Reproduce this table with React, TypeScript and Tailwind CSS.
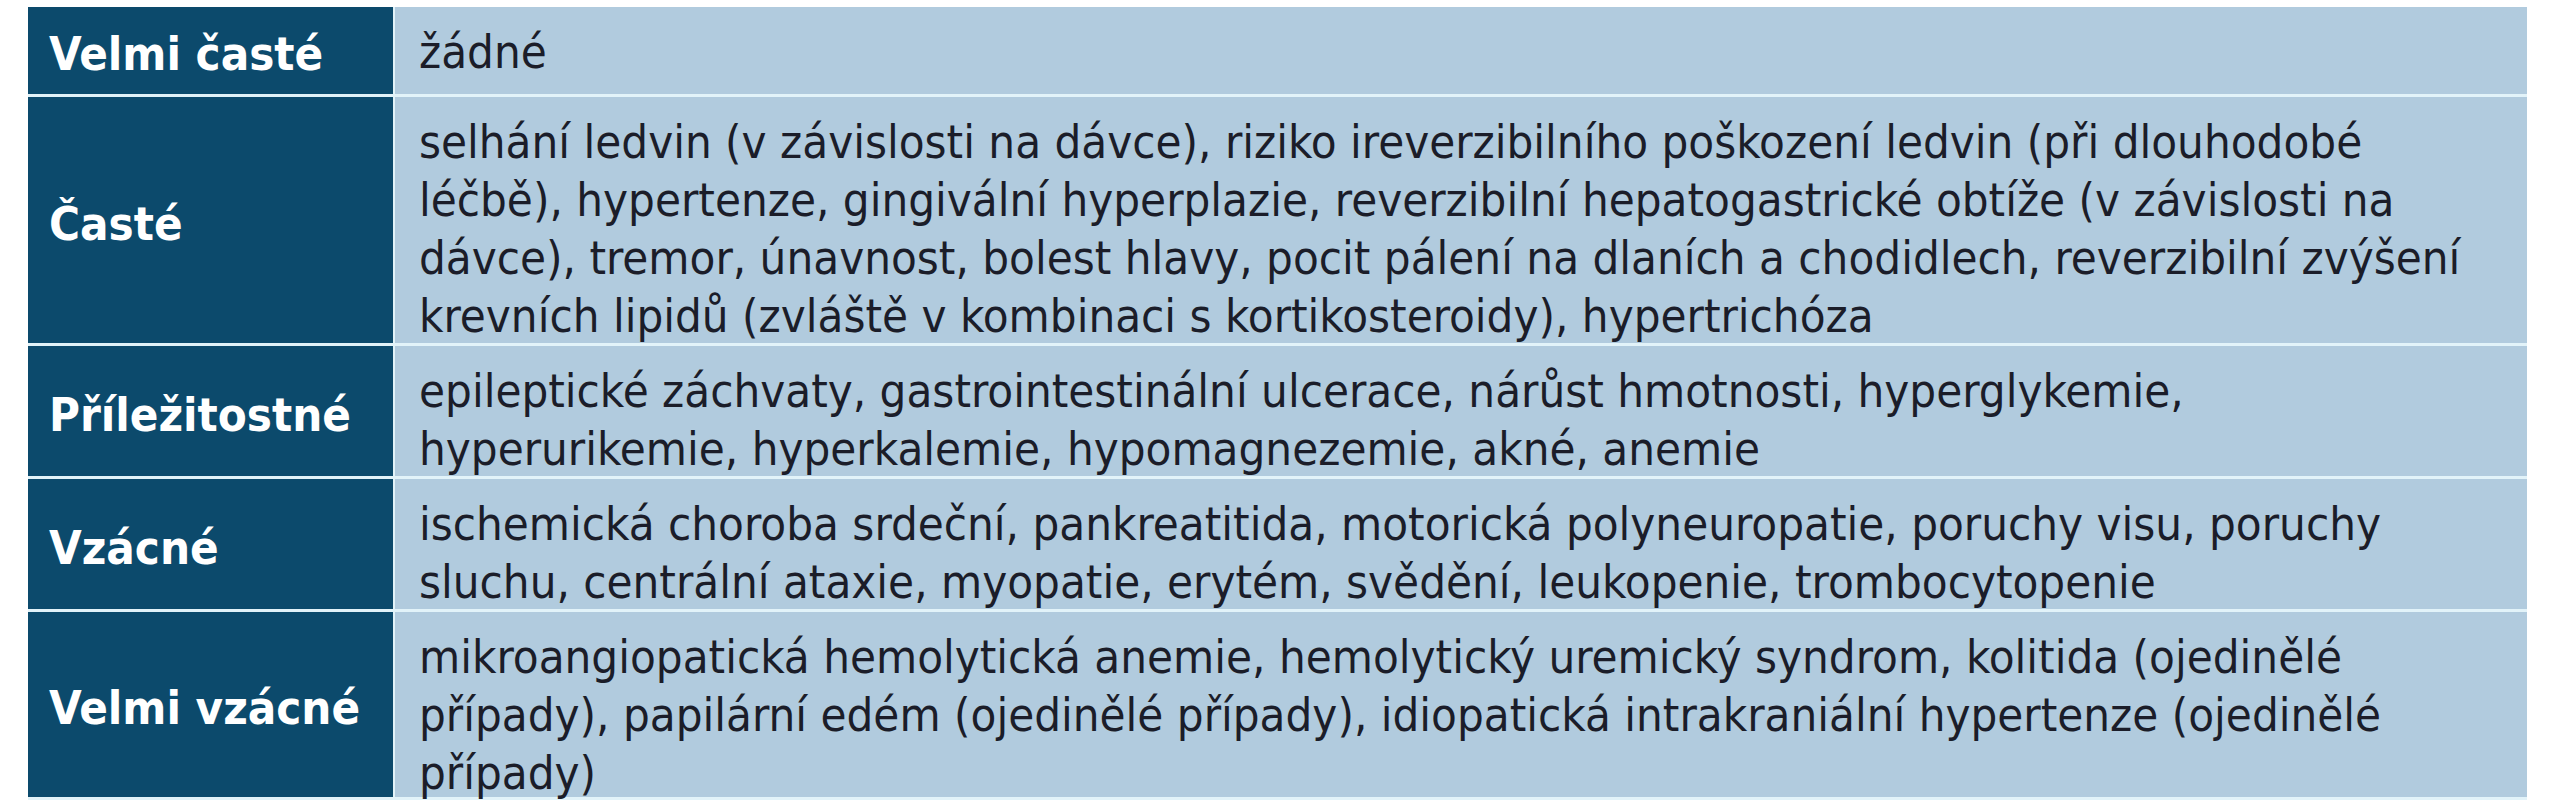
import React from "react";

const rows: { label: string; lines: string[]; h: string }[] = [
  { label: "Velmi časté", lines: ["žádné"], h: "h-[87px]" },
  {
    label: "Časté",
    lines: [
      "selhání ledvin (v závislosti na dávce), riziko ireverzibilního poškození ledvin (při dlouhodobé",
      "léčbě), hypertenze, gingivální hyperplazie, reverzibilní hepatogastrické obtíže (v závislosti na",
      "dávce), tremor, únavnost, bolest hlavy, pocit pálení na dlaních a chodidlech, reverzibilní zvýšení",
      "krevních lipidů (zvláště v kombinaci s kortikosteroidy), hypertrichóza",
    ],
    h: "h-[246px]",
  },
  {
    label: "Příležitostné",
    lines: [
      "epileptické záchvaty, gastrointestinální ulcerace, nárůst hmotnosti, hyperglykemie,",
      "hyperurikemie, hyperkalemie, hypomagnezemie, akné, anemie",
    ],
    h: "h-[130px]",
  },
  {
    label: "Vzácné",
    lines: [
      "ischemická choroba srdeční, pankreatitida, motorická polyneuropatie, poruchy visu, poruchy",
      "sluchu, centrální ataxie, myopatie, erytém, svědění, leukopenie, trombocytopenie",
    ],
    h: "h-[130px]",
  },
  {
    label: "Velmi vzácné",
    lines: [
      "mikroangiopatická hemolytická anemie, hemolytický uremický syndrom, kolitida (ojedinělé",
      "případy), papilární edém (ojedinělé případy), idiopatická intrakraniální hypertenze (ojedinělé",
      "případy)",
    ],
    h: "h-[185px]",
  },
];

export default function App() {
  return (
    <div className="w-[2572px] h-[800px] bg-white pt-[7px] pl-[28px] font-['DejaVu_Sans_Condensed','DejaVu_Sans',sans-serif]">
      <div className="w-[2499px] flex flex-col gap-[3px] bg-[#e2f3f9] pb-[3px]">
        {rows.map((r) => (
          <div key={r.label} className={`flex gap-[2px] ${r.h}`}>
            <div className="w-[365px] shrink-0 bg-[#0c4a6c] flex items-center pl-[21px] pt-[6px] text-white font-bold text-[47px] leading-none">
              {r.label}
            </div>
            <div className="flex-1 bg-[#b1cbde] pl-[24px] pt-[16px] text-[#1b1d29] text-[47px] leading-[58px] whitespace-nowrap">
              {r.lines.map((l, i) => (
                <div key={i}>{l}</div>
              ))}
            </div>
          </div>
        ))}
      </div>
    </div>
  );
}
